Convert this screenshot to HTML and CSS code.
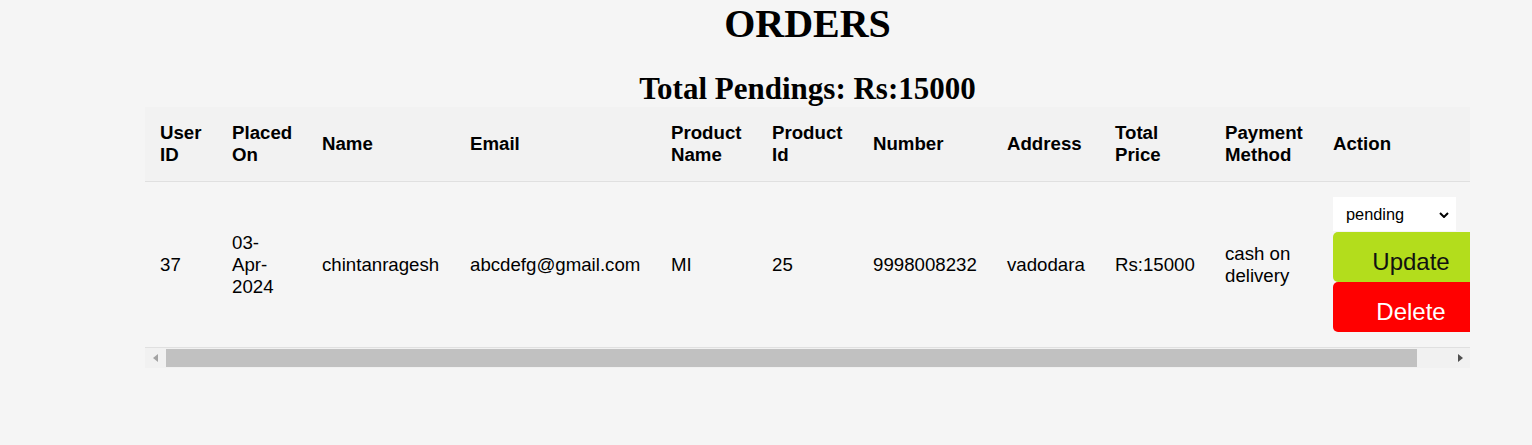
FILE: index.html
```html
<!DOCTYPE html>
<html lang="en">
<head>
<meta charset="utf-8">
<title>Orders</title>
<link rel="stylesheet" href="styles.css">
</head>
<body>
<main class="page">
  <h1 class="title">ORDERS</h1>
  <h2 class="subtitle">Total Pendings: Rs:15000</h2>
  <div class="table-box">
    <div class="scroll">
      <table class="orders">
        <colgroup>
          <col class="c-uid"><col class="c-date"><col class="c-name"><col class="c-email">
          <col class="c-pname"><col class="c-pid"><col class="c-num"><col class="c-addr">
          <col class="c-price"><col class="c-pay"><col class="c-act">
        </colgroup>
        <thead>
          <tr>
            <th>User ID</th>
            <th>Placed On</th>
            <th>Name</th>
            <th>Email</th>
            <th>Product Name</th>
            <th>Product Id</th>
            <th>Number</th>
            <th>Address</th>
            <th>Total Price</th>
            <th>Payment Method</th>
            <th>Action</th>
          </tr>
        </thead>
        <tbody>
          <tr>
            <td>37</td>
            <td>03-Apr-2024</td>
            <td>chintanragesh</td>
            <td>abcdefg@gmail.com</td>
            <td>MI</td>
            <td>25</td>
            <td>9998008232</td>
            <td>vadodara</td>
            <td>Rs:15000</td>
            <td>cash on delivery</td>
            <td>
              <span class="select-wrap">
                <select class="status">
                  <option>pending</option>
                  <option>completed</option>
                </select>
                <svg class="chev" width="10" height="6" viewBox="0 0 10 6" aria-hidden="true"><path d="M1 1 L5 5 L9 1" fill="none" stroke="#000" stroke-width="2"/></svg>
              </span>
              <button class="btn btn-update" type="button">Update</button>
              <button class="btn btn-delete" type="button">Delete</button>
            </td>
          </tr>
        </tbody>
      </table>
    </div>
    <div class="hscroll" aria-hidden="true">
      <div class="arrow arrow-left"><span class="tri tri-left"></span></div>
      <div class="track"><div class="thumb"></div></div>
      <div class="arrow arrow-right"><span class="tri tri-right"></span></div>
    </div>
  </div>
</main>
</body>
</html>
```
FILE: styles.css
```css
html, body {
  margin: 0;
  padding: 0;
  background: #f5f5f5;
}

.page {
  margin-left: 145px;
  width: 1325px;
  padding-top: 0;
}

.title {
  margin: 0;
  font-family: "Liberation Serif", "Times New Roman", serif;
  font-size: 40px;
  font-weight: bold;
  text-align: center;
  color: #000;
}

.subtitle {
  margin: 24px 0 0;
  font-family: "Liberation Serif", "Times New Roman", serif;
  font-size: 31px;
  font-weight: bold;
  text-align: center;
  color: #000;
}

.scroll {
  width: 1325px;
  overflow: hidden;
}

.orders {
  width: 1359px;
  table-layout: fixed;
  border-collapse: collapse;
  font-family: "Liberation Sans", Arial, sans-serif;
  font-size: 18.67px;
  color: #000;
}

.c-uid { width: 72px; }
.c-date { width: 90px; }
.c-name { width: 148px; }
.c-email { width: 201px; }
.c-pname { width: 101px; }
.c-pid { width: 101px; }
.c-num { width: 134px; }
.c-addr { width: 108px; }
.c-price { width: 110px; }
.c-pay { width: 108px; }
.c-act { width: 186px; }

.orders th,
.orders td {
  padding: 15px;
  text-align: left;
  vertical-align: middle;
  border-bottom: 1px solid #e0e0e0;
}

.orders th {
  background: #f2f2f2;
  font-weight: bold;
}

.select-wrap {
  position: relative;
  display: block;
  width: 123px;
  height: 34px;
  margin-bottom: 1px;
}

.status {
  appearance: none;
  -webkit-appearance: none;
  display: block;
  width: 123px;
  height: 34px;
  margin: 0;
  padding: 0 0 0 13px;
  border: none;
  border-radius: 0;
  background: #fff;
  font-family: "Liberation Sans", Arial, sans-serif;
  font-size: 16.33px;
  color: #000;
}

.chev {
  position: absolute;
  right: 7px;
  top: 15px;
  pointer-events: none;
}

.btn {
  display: block;
  box-sizing: border-box;
  width: 156px;
  height: 50px;
  margin: 0;
  padding: 9px 0 0;
  border: none;
  border-radius: 5px;
  font-family: "Liberation Sans", Arial, sans-serif;
  font-size: 24px;
  text-align: center;
  cursor: pointer;
}

.btn-update {
  background: #b3dd1c;
  color: #111;
}

.btn-delete {
  background: #ff0000;
  color: #fff;
}

.hscroll {
  display: flex;
  width: 1325px;
  height: 20px;
  background: #f1f1f1;
}

.arrow {
  width: 20px;
  display: flex;
  align-items: center;
  justify-content: center;
}

.track {
  flex: 1;
  display: flex;
  align-items: center;
  padding-left: 1px;
}

.thumb {
  width: 1251px;
  height: 18px;
  background: #c1c1c1;
}

.tri {
  width: 0;
  height: 0;
  border-top: 4.5px solid transparent;
  border-bottom: 4.5px solid transparent;
}

.tri-left {
  border-right: 5px solid #a3a3a3;
}

.tri-right {
  border-left: 5px solid #505050;
}
```
